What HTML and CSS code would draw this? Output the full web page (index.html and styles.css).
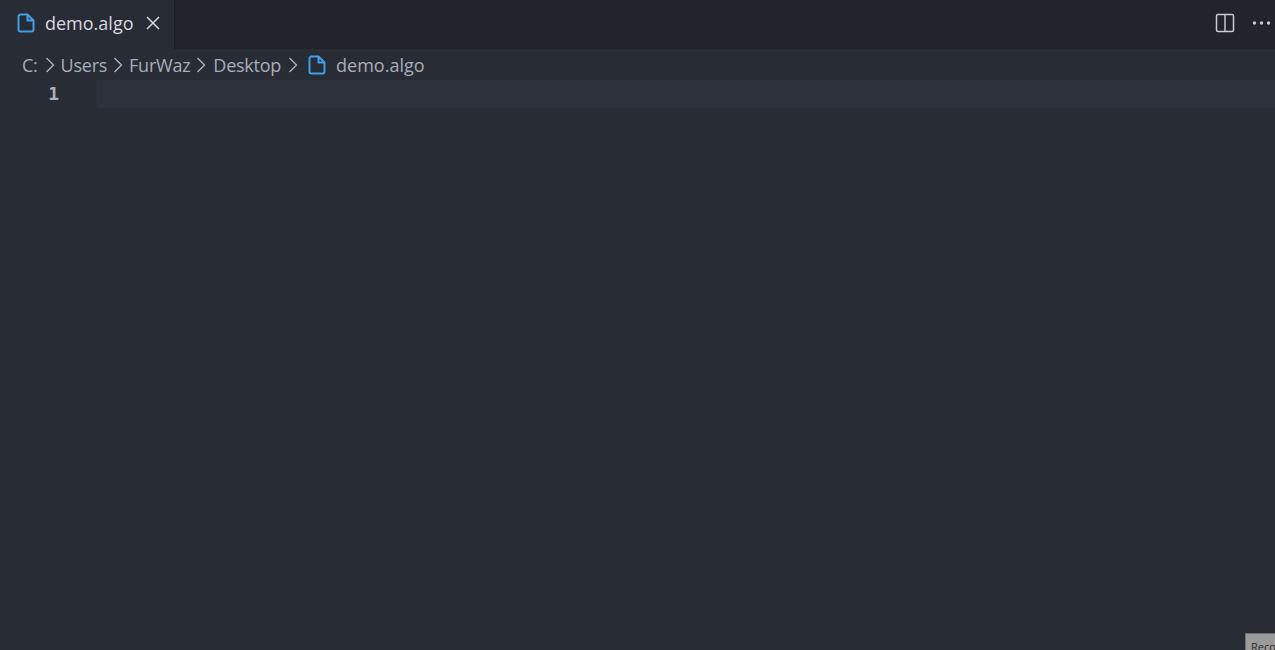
FILE: index.html
```html
<!DOCTYPE html>
<html lang="en">
<head>
<meta charset="utf-8">
<title>demo.algo</title>
<link rel="stylesheet" href="styles.css">
</head>
<body>
<div class="app">
  <div class="tabbar">
    <div class="tab">
      <svg class="file-icon" viewBox="0 0 18 20" width="18" height="20"><path d="M3.500 1.500h7L16.500 7.500V16.500a2 2 0 0 1-2 2H3.500a2 2 0 0 1-2-2V3.500a2 2 0 0 1 2-2ZM10.500 1.500V7.500H16.500" fill="none" stroke="#3f9fe8" stroke-width="2" stroke-linejoin="round"/></svg>
      <span class="tab-name">demo.algo</span>
      <svg class="close-icon" viewBox="0 0 14 14" width="14" height="14"><path d="M1 1L13 13M13 1L1 13" fill="none" stroke="#d4d9e2" stroke-width="1.500"/></svg>
    </div>
    <div class="actions">
      <svg viewBox="0 0 20 20" width="20" height="20"><rect x="1.500" y="1.500" width="17" height="17" rx="1.500" fill="none" stroke="#c6cad1" stroke-width="1.500"/><path d="M10 1.500V18.500" stroke="#c6cad1" stroke-width="1.500"/></svg>
      <svg viewBox="0 0 20 6" width="20" height="6"><circle cx="2.500" cy="3" r="1.700" fill="#c6cad1"/><circle cx="9.500" cy="3" r="1.700" fill="#c6cad1"/><circle cx="16.500" cy="3" r="1.700" fill="#c6cad1"/></svg>
    </div>
  </div>
  <nav class="crumbs">
    <span>C:</span>
    <svg class="chev chev-first" viewBox="0 0 10 18" width="10" height="18"><path d="M1.500 2L8.500 9L1.500 16" fill="none" stroke="#abb2bf" stroke-width="1.400"/></svg>
    <span>Users</span>
    <svg class="chev" viewBox="0 0 10 18" width="10" height="18"><path d="M1.500 2L8.500 9L1.500 16" fill="none" stroke="#abb2bf" stroke-width="1.400"/></svg>
    <span>FurWaz</span>
    <svg class="chev chev-wide" viewBox="0 0 10 18" width="10" height="18"><path d="M1.500 2L8.500 9L1.500 16" fill="none" stroke="#abb2bf" stroke-width="1.400"/></svg>
    <span>Desktop</span>
    <svg class="chev chev-last" viewBox="0 0 10 18" width="10" height="18"><path d="M1.500 2L8.500 9L1.500 16" fill="none" stroke="#abb2bf" stroke-width="1.400"/></svg>
    <svg class="file-icon crumb-file" viewBox="0 0 18 20" width="18" height="20"><path d="M3.500 1.500h7L16.500 7.500V16.500a2 2 0 0 1-2 2H3.500a2 2 0 0 1-2-2V3.500a2 2 0 0 1 2-2ZM10.500 1.500V7.500H16.500" fill="none" stroke="#3f9fe8" stroke-width="2" stroke-linejoin="round"/></svg>
    <span class="crumb-name">demo.algo</span>
  </nav>
  <div class="line">
    <span class="gutter">1</span>
    <div class="current"></div>
  </div>
  <div class="badge">Recording</div>
</div>
</body>
</html>
```
FILE: styles.css
```css
* { box-sizing: border-box; }
html, body { margin: 0; height: 100%; overflow: hidden; }
body { background: #282c34; font-family: "Open Sans", "Noto Sans", sans-serif; }
.app { position: relative; width: 1275px; height: 650px; overflow: hidden; display: flex; flex-direction: column; }
.tabbar { height: 49px; background: #21252b; display: flex; justify-content: space-between; flex: none; }
.tab { width: 175px; height: 49px; background: #282c34; border-right: 1px solid #181a1f; display: flex; align-items: center; padding: 0 0 3px 17px; color: #d7dae0; font-size: 18px; }
.tab-name { margin-left: 10px; }
.close-icon { margin-left: 12px; }
.actions { display: flex; align-items: center; gap: 17px; padding: 0 3px 3px 0; }
.crumbs { height: 31px; display: flex; align-items: center; padding-left: 22px; color: #a7adb8; font-size: 18px; letter-spacing: -0.25px; flex: none; }
.chev { margin: 0 6px; }
.chev-first { margin-left: 7px; }
.chev-wide { margin-right: 7px; }
.chev-last { margin-left: 7px; }
.crumb-file { margin-left: 4px; }
.crumb-name { margin-left: 10px; letter-spacing: 0; }
.line { height: 28px; display: flex; flex: none; }
.gutter { width: 97px; padding-right: 38px; text-align: right; font: bold 18px/28px "DejaVu Sans Mono", "Liberation Mono", monospace; color: #abb2bf; }
.current { flex: 1; background: #2c313c; }
.badge { position: absolute; left: 1245px; top: 633px; width: 60px; height: 30px; background: #9b9b9b; border: 1px solid #6d6d6d; color: #2a2a2a; font-size: 11px; padding: 5px; overflow: hidden; white-space: nowrap; }
```
